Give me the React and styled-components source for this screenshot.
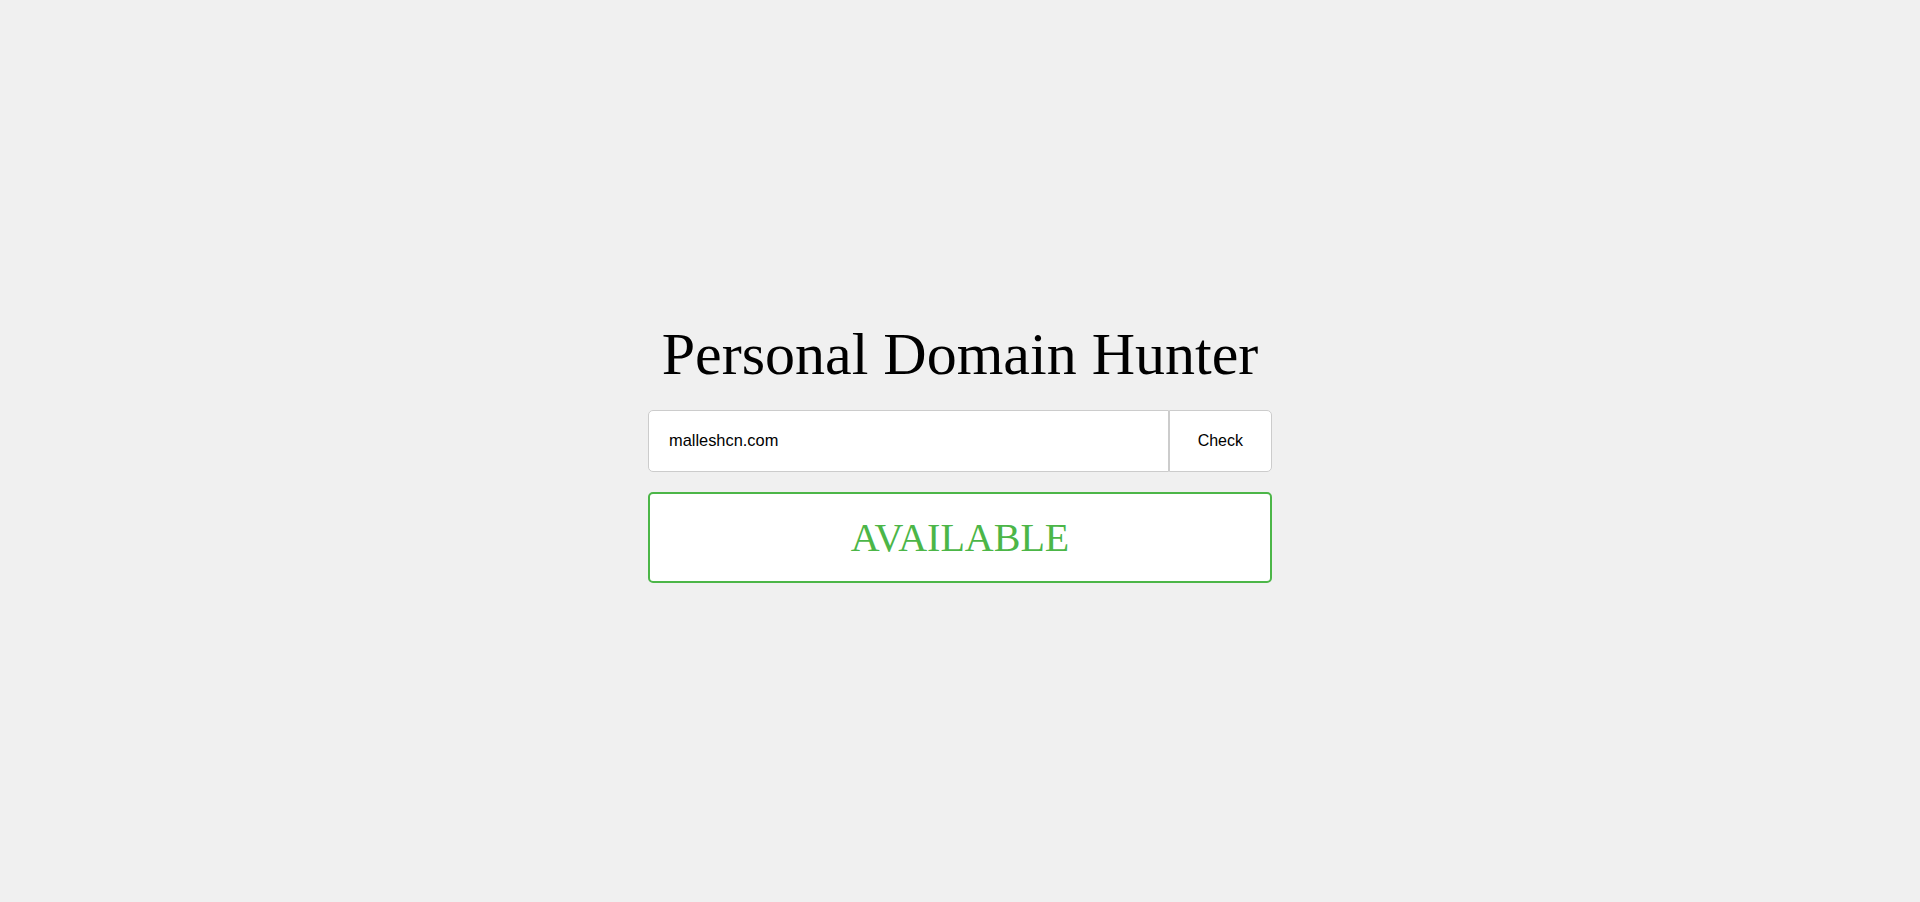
import { createGlobalStyle, styled } from 'styled-components';

const GlobalStyle = createGlobalStyle`
    html, body {
        margin: 0;
        padding: 0;
        background: #f0f0f0;
    }
`;

const Page = styled.div`
    min-height: 100vh;
    display: flex;
    align-items: center;
    justify-content: center;
`;

const Hunter = styled.div`
    width: 624px;
    display: flex;
    flex-direction: column;
    align-items: stretch;
`;

const Title = styled.h1`
    margin: 0 0 21px;
    font-family: 'Liberation Serif', 'Times New Roman', serif;
    font-size: 60px;
    font-weight: 400;
    color: #000;
    text-align: center;
    white-space: nowrap;
`;

const SearchRow = styled.form`
    display: flex;
    height: 62px;
    margin: 0;
`;

const DomainInput = styled.input`
    flex: 1;
    min-width: 0;
    box-sizing: border-box;
    height: 100%;
    padding: 0 20px;
    border: 1px solid #cccccc;
    border-radius: 5px 0 0 5px;
    background: #fff;
    font-family: 'Liberation Sans', Arial, sans-serif;
    font-size: 16.4px;
    color: #000;
    outline: none;
`;

const CheckButton = styled.button`
    box-sizing: border-box;
    height: 100%;
    padding: 0 28px;
    border: 1px solid #cccccc;
    border-radius: 0 5px 5px 0;
    background: #fff;
    font-family: 'Liberation Sans', Arial, sans-serif;
    font-size: 16px;
    color: #000;
    cursor: pointer;
`;

const Result = styled.div`
    box-sizing: border-box;
    margin-top: 20px;
    height: 91px;
    display: flex;
    align-items: center;
    justify-content: center;
    background: #fff;
    border: 2px solid ${(p) => (p.$available ? '#4cb648' : '#e0433b')};
    border-radius: 5px;
    font-family: 'Liberation Serif', 'Times New Roman', serif;
    font-size: 40px;
    color: ${(p) => (p.$available ? '#4cb648' : '#e0433b')};
`;

function App() {
    const available = true;

    return (
        <Page>
            <GlobalStyle />
            <Hunter>
                <Title>Personal Domain Hunter</Title>
                <SearchRow onSubmit={(e) => e.preventDefault()}>
                    <DomainInput type="text" defaultValue="malleshcn.com" />
                    <CheckButton type="submit">Check</CheckButton>
                </SearchRow>
                <Result $available={available}>{available ? 'AVAILABLE' : 'TAKEN'}</Result>
            </Hunter>
        </Page>
    );
}

export default App;
